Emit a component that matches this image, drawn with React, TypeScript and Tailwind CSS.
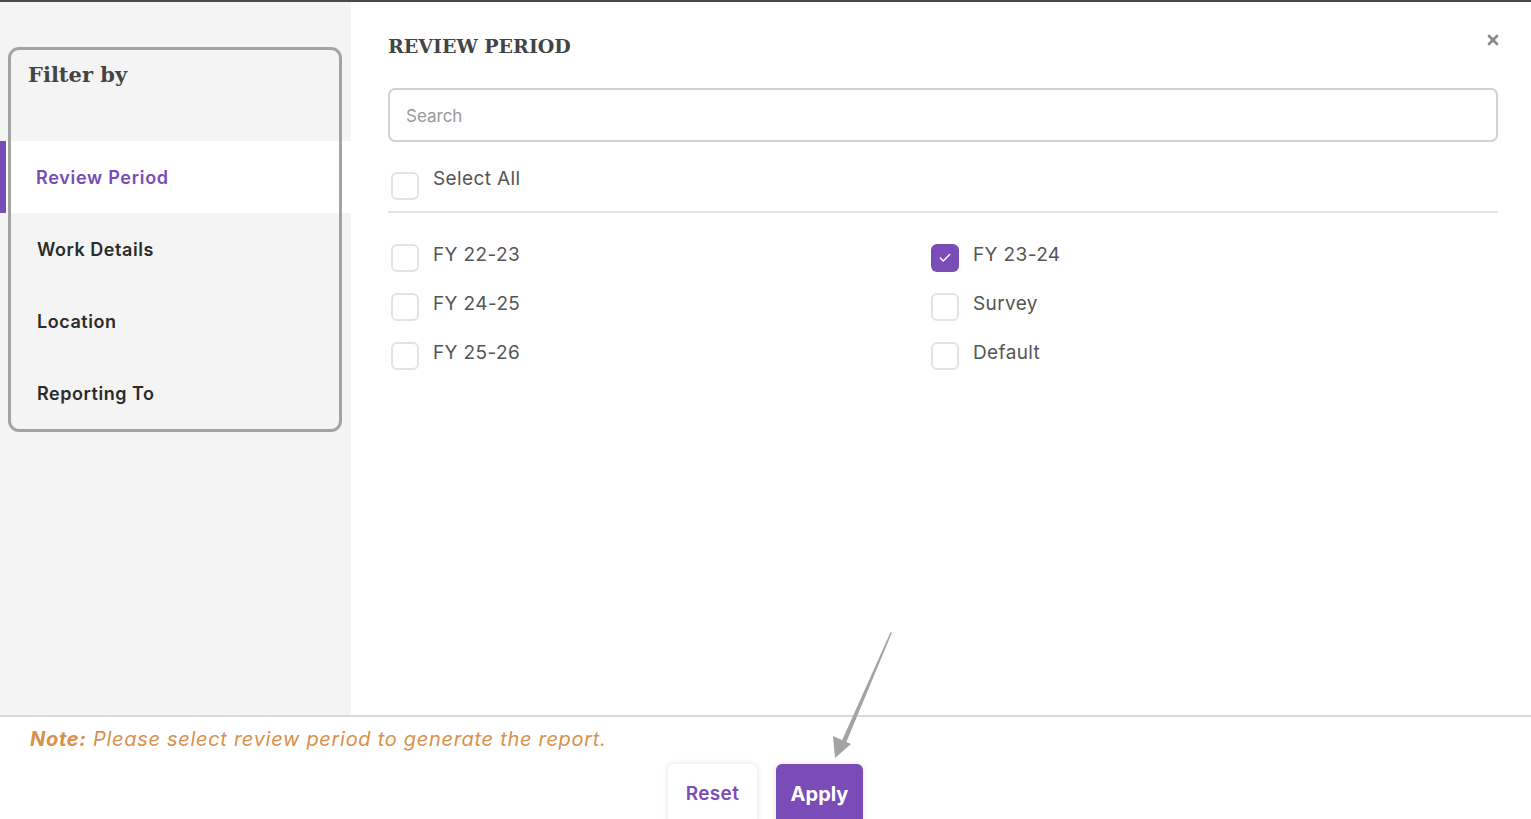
import { X, Check } from "lucide-react";

const navItems = ["Review Period", "Work Details", "Location", "Reporting To"];

const options = [
    { name: "FY 22-23", checked: false },
    { name: "FY 23-24", checked: true },
    { name: "FY 24-25", checked: false },
    { name: "Survey", checked: false },
    { name: "FY 25-26", checked: false },
    { name: "Default", checked: false },
];

function Box({ checked }: { checked: boolean }) {
    if (checked) {
        return (
            <span className="flex h-[28px] w-[28px] shrink-0 items-center justify-center rounded-[6px] bg-[#7a4cb8]">
                <Check className="h-[14px] w-[14px] text-white" strokeWidth={2.5} />
            </span>
        );
    }
    return <span className="h-[28px] w-[28px] shrink-0 rounded-[6px] border-2 border-[#e3e3e3] bg-white" />;
}

function Option({ name, checked, lift = false }: { name: string; checked: boolean; lift?: boolean }) {
    return (
        <label className="flex items-start gap-[14px] pl-[3px]">
            <Box checked={checked} />
            <span className={(lift ? "-mt-[5px]" : "-mt-[1px]") + " text-[19px] leading-[24px] tracking-[0.02em] text-[#555]"}>{name}</span>
        </label>
    );
}

export default function App() {
    return (
        <div className="relative h-[819px] w-[1531px] overflow-hidden bg-white font-['Inter',sans-serif]">
            <div className="h-[2px] bg-[#4a4a4a]" />
            <div className="flex h-[715px] border-b-2 border-[#d6d9df]">
                {/* Sidebar */}
                <aside className="w-[351px] shrink-0 bg-[#f4f4f4]">
                    <div className="h-[139px] pl-[28px] pt-[58px]">
                        <h2 className="font-['DejaVu_Serif',serif] text-[21px] font-bold leading-[30px] text-[#444]">Filter by</h2>
                    </div>
                    {navItems.map((item, i) => (
                        <div
                            key={item}
                            className={
                                i === 0
                                    ? "flex h-[72px] items-center border-l-[6px] border-[#7a4cb8] bg-white pl-[30px] text-[18px] font-semibold tracking-[0.04em] text-[#7a4cb8]"
                                    : "flex h-[72px] items-center pl-[37px] text-[18px] font-semibold tracking-[0.03em] text-[#2b2b2b]"
                            }
                        >
                            {item}
                        </div>
                    ))}
                </aside>

                {/* Main panel */}
                <main className="relative flex-1 pl-[37px] pr-[33px] pt-[29px]">
                    <div className="flex items-center justify-between">
                        <h1 className="font-['DejaVu_Serif',serif] text-[19px] font-bold leading-[30px] text-[#444]">REVIEW PERIOD</h1>
                        <X className="-mr-[3px] -mt-[12px] h-[16px] w-[16px] text-[#8a8a8a]" strokeWidth={4} />
                    </div>
                    <div className="mt-[27px] flex h-[54px] items-center rounded-[7px] border-2 border-[#d2d2d2] px-[16px] pt-[4px]">
                        <input
                            className="w-full bg-transparent text-[17px] text-[#333] outline-none placeholder:text-[#999]"
                            placeholder="Search"
                        />
                    </div>
                    <div className="mt-[30px] border-b-2 border-[#e2e2e2] pb-[11px]">
                        <Option name="Select All" checked={false} lift />
                    </div>
                    <div className="mt-[31px] grid grid-cols-[540px_1fr] gap-y-[21px]">
                        {options.map((o) => (
                            <Option key={o.name} name={o.name} checked={o.checked} />
                        ))}
                    </div>
                </main>
            </div>

            {/* Footer */}
            <div className="pl-[30px] pt-[9px]">
                <p className="text-[20px] italic leading-[26px] tracking-[0.035em] text-[#d9904a]">
                    <span className="font-bold">Note:</span> Please select review period to generate the report.
                </p>
            </div>
            <div className="mt-[12px] flex justify-center gap-[19px]">
                <button className="h-[60px] w-[89px] rounded-t-[6px] bg-white text-[19px] font-semibold tracking-[0.02em] text-[#7a4cb8] shadow-[0_0_6px_rgba(0,0,0,0.12)]">
                    Reset
                </button>
                <button className="h-[60px] w-[87px] rounded-t-[6px] bg-[#7a4cb8] text-[20px] font-bold text-white shadow-[0_0_6px_rgba(0,0,0,0.12)]">
                    Apply
                </button>
            </div>

            {/* Annotation: box around filter list */}
            <div className="pointer-events-none absolute left-[8px] top-[47px] h-[385px] w-[334px] rounded-[11px] border-[3px] border-[#a3a3a3]" />

            {/* Annotation: arrow */}
            <svg className="pointer-events-none absolute left-[825px] top-[628px]" width="75" height="135" viewBox="0 0 75 135">
                <path d="M66 5 L18 112 L21 113 Z" fill="#a3a3a3" stroke="#a3a3a3" strokeWidth="1.5" strokeLinejoin="round" />
                <path d="M10 130 L8 108 L26 116 Z" fill="#a3a3a3" />
            </svg>
        </div>
    );
}
